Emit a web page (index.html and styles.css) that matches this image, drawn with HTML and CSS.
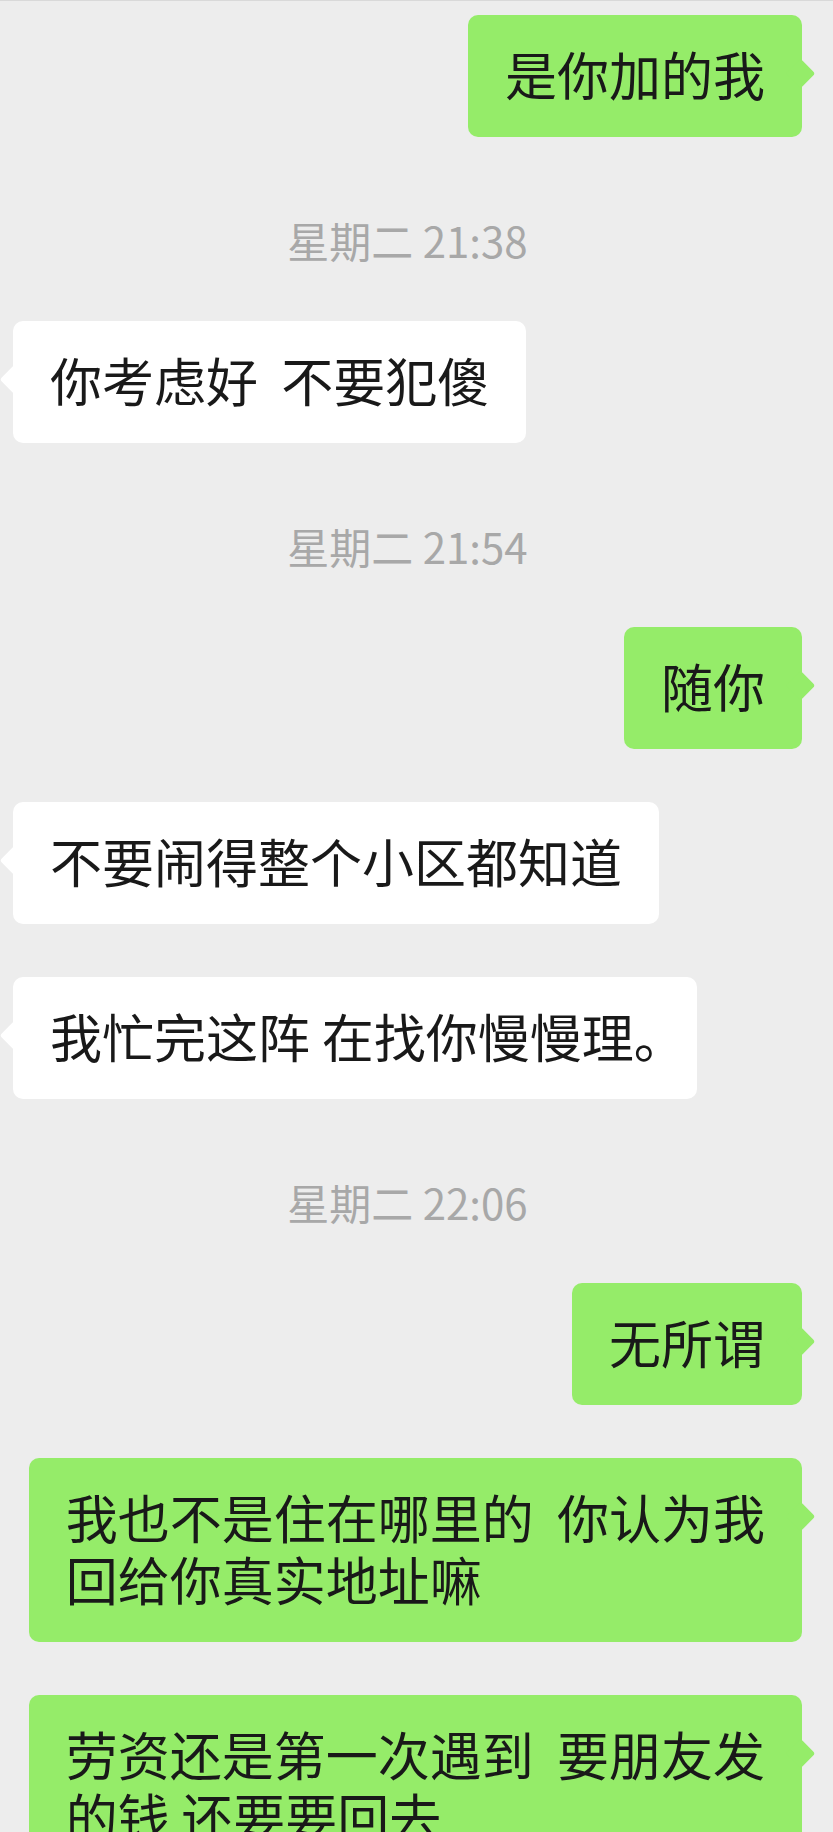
FILE: index.html
```html
<!DOCTYPE html>
<html lang="zh-CN">
<head>
  <meta charset="UTF-8">
  <meta name="viewport" content="width=device-width, initial-scale=1">
  <title>聊天记录</title>
  <link rel="stylesheet" href="styles.css">
</head>
<body>
  <div class="chat">
    <div class="msg me"><div class="bubble">是你加的我</div></div>

    <div class="time">星期二 21:38</div>
    <div class="msg other"><div class="bubble">你考虑好  不要犯傻</div></div>

    <div class="time">星期二 21:54</div>
    <div class="msg me"><div class="bubble">随你</div></div>
    <div class="msg other"><div class="bubble">不要闹得整个小区都知道</div></div>
    <div class="msg other"><div class="bubble">我忙完这阵 在找你慢慢理。</div></div>

    <div class="time">星期二 22:06</div>
    <div class="msg me"><div class="bubble">无所谓</div></div>
    <div class="msg me"><div class="bubble">我也不是住在哪里的  你认为我<br>回给你真实地址嘛</div></div>
    <div class="msg me"><div class="bubble">劳资还是第一次遇到  要朋友发<br>的钱 还要要回去</div></div>
  </div>
</body>
</html>
```

FILE: styles.css
```css
body {
  margin: 0;
  background: #ededed;
  border-top: 1px solid #d9d9d9;
  font-family: "Noto Sans CJK SC", "Noto Sans", sans-serif;
  color: #191919;
}
.chat {
  display: flex;
  flex-direction: column;
  padding: 14px 31px 0 13px;
}
.msg {
  display: flex;
  margin-bottom: 53px;
}
.msg.me {
  justify-content: flex-end;
  padding-left: 14px;
}
.msg.other {
  justify-content: flex-start;
  padding-right: 60px;
}
.bubble {
  position: relative;
  font-size: 52px;
  line-height: 62px;
  padding: 28px 37px 32px;
  border-radius: 10px;
  white-space: pre;
  font-feature-settings: "halt";
}
.bubble::after {
  content: "";
  position: absolute;
  top: 48px;
  width: 21px;
  height: 21px;
  border-radius: 3px;
  transform: rotate(45deg);
}
.me .bubble,
.me .bubble::after {
  background: #95ec69;
}
.me .bubble::after {
  right: -9px;
}
.other .bubble,
.other .bubble::after {
  background: #ffffff;
}
.other .bubble::after {
  left: -9px;
}
.time {
  text-align: center;
  font-size: 42px;
  line-height: 50px;
  color: #a8a8a8;
  padding-top: 25px;
  margin-bottom: 56px;
}
```
